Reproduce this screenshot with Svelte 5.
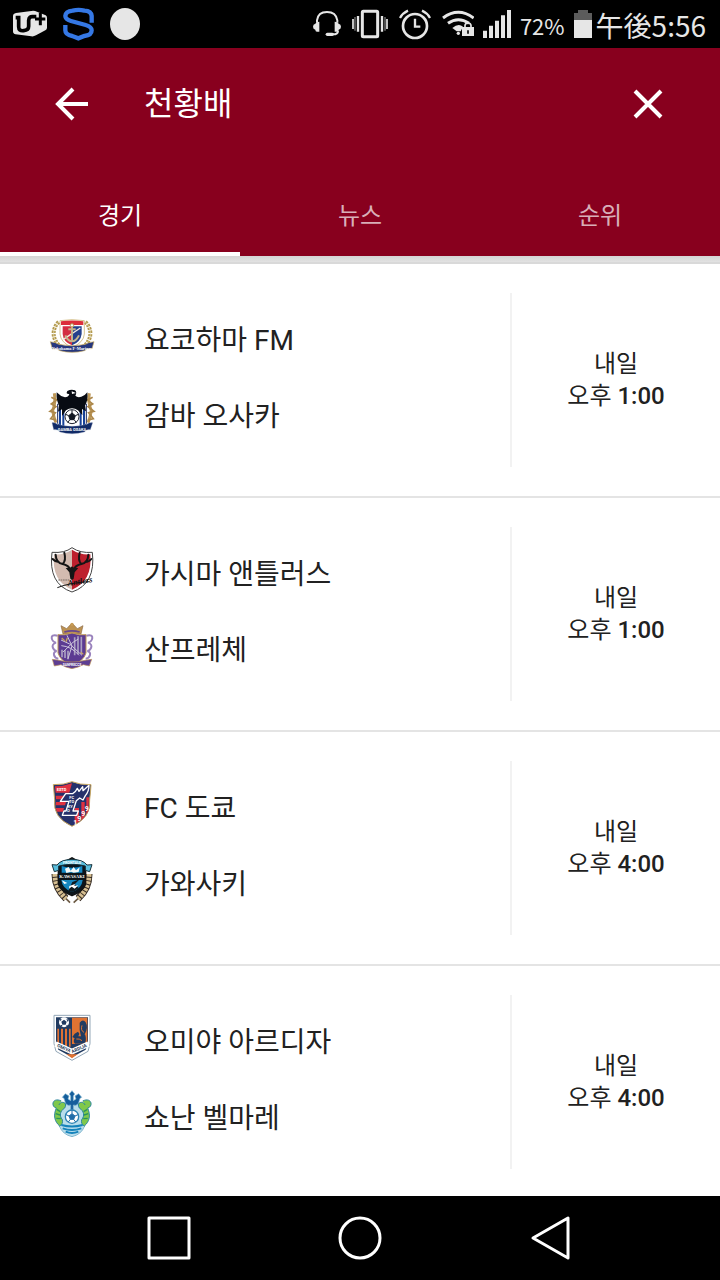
<script>
  const tabs = ["경기", "뉴스", "순위"];
  let active = $state("경기");

  const matches = [
    { home: "요코하마 FM", away: "감바 오사카", homeCrest: marinos, awayCrest: gamba, day: "내일", half: "오후", time: "1:00" },
    { home: "가시마 앤틀러스", away: "산프레체", homeCrest: antlers, awayCrest: sanfrecce, day: "내일", half: "오후", time: "1:00" },
    { home: "FC 도쿄", away: "가와사키", homeCrest: tokyo, awayCrest: frontale, day: "내일", half: "오후", time: "4:00" },
    { home: "오미야 아르디자", away: "쇼난 벨마레", homeCrest: ardija, awayCrest: bellmare, day: "내일", half: "오후", time: "4:00" },
  ];
</script>

{#snippet marinos()}
  <svg class="crest" viewBox="24 6 144 144" aria-hidden="true">
    <g fill="none" stroke="#b39a4f" stroke-width="12" stroke-dasharray="7 3">
      <path d="M56 36C34 58 36 90 62 110" />
      <path d="M136 36C158 58 156 90 130 110" />
    </g>
    <g fill="none" stroke="#ece3c0" stroke-width="2">
      <path d="M56 36C34 58 36 90 62 110M136 36C158 58 156 90 130 110" />
    </g>
    <path d="M60 32Q96 26 133 32V72Q131 98 96 112Q62 98 60 72Z" fill="#fff" stroke="#c3a65a" stroke-width="2" />
    <path d="M63 34Q96 29 130 34V45H63Z" fill="#dc2f3b" />
    <path d="M68 49H96V106Q70 96 68 72Z" fill="#d32e42" />
    <path d="M96 49H125V72Q122 96 96 106Z" fill="#25418d" />
    <path d="M70 88L121 54" stroke="#f1e9df" stroke-width="4" />
    <path d="M96 47V92M85 58H107M76 76Q84 94 96 94Q108 94 117 76" fill="none" stroke="#c3b48c" stroke-width="6" />
    <circle cx="96" cy="46" r="5" fill="#fff" stroke="#b89b51" stroke-width="3" />
    <path d="M31 95Q48 97 56 103Q96 112 136 103Q144 97 162 95L156 116Q141 114 133 122Q96 132 60 122Q51 114 37 117Z" fill="#26377e" stroke="#c8aa60" stroke-width="2" />
    <text x="96" y="119" font-size="13" font-weight="700" text-anchor="middle" fill="#fff" class="serif">Yokohama F·Marinos</text>
  </svg>
{/snippet}

{#snippet gamba()}
  <svg class="crest" viewBox="24 234 144 144" aria-hidden="true">
    <g fill="none" stroke="#bd9757" stroke-width="9">
      <path d="M43 250Q48 278 38 302Q42 325 48 338" />
      <path d="M148 250Q143 278 154 302Q150 325 144 338" />
    </g>
    <path d="M34 262L50 270L34 282L48 290L30 304L46 308L32 326L48 330M158 262L142 270L158 282L144 290L162 304L146 308L160 326L144 330" fill="none" stroke="#ad884b" stroke-width="5" />
    <path d="M53 282H139V340Q132 356 96 366Q60 356 53 340Z" fill="#fff" stroke="#1d2a5e" stroke-width="3" />
    <path d="M60 284V348M70 284V354M122 284V354M132 284V348" stroke="#174198" stroke-width="6" />
    <path d="M50 247Q61 259 75 262Q85 262 88 252Q76 253 82 243Q94 236 105 241Q112 247 106 257Q113 264 124 260Q136 256 142 247Q145 271 135 286L138 304L126 297L127 316L114 301Q96 288 78 301L66 318V298L54 305L57 286Q48 270 50 247Z" fill="#080b13" />
    <path d="M95 244L108 249L96 252Z" fill="#fff" />
    <circle cx="96" cy="320" r="21" fill="#fff" stroke="#1d2230" stroke-width="3" />
    <path d="M96 309L106 317L102 329H90L86 317ZM96 300V309M106 317L115 313M102 329L109 337M90 329L83 337M86 317L77 313" fill="#111722" stroke="#111722" stroke-width="3" />
    <path d="M36 338Q46 337 52 343Q96 355 140 343Q147 337 158 338L151 359Q140 357 133 366Q96 377 60 366Q52 357 41 359Z" fill="#102a67" stroke="#a9b2ca" stroke-width="1" />
    <text x="96" y="364" font-size="12" font-weight="700" text-anchor="middle" fill="#fff">GAMBA OSAKA</text>
  </svg>
{/snippet}

{#snippet antlers()}
  <svg class="crest" viewBox="24 18 144 144" aria-hidden="true">
    <path d="M96 23Q120 40 157 37Q168 132 96 156Q24 132 36 37Q74 40 96 23Z" fill="#fff" stroke="#444" stroke-width="3" />
    <path d="M96 29Q72 45 42 43Q34 124 96 149Z" fill="#d3bbb0" />
    <path d="M96 29Q120 45 151 43Q158 124 96 149Z" fill="#bd202d" />
    <path d="M92 90Q86 76 68 72Q48 68 47 44M68 72Q79 61 73 38M56 66Q46 66 38 57M100 90Q106 76 124 72Q144 68 145 44M124 72Q113 61 119 38M136 66Q147 66 154 57" fill="none" stroke="#151515" stroke-width="6" stroke-linecap="round" />
    <path d="M77 84L91 83L96 79L101 83L115 84L104 97L101 116L96 120L91 116L88 97Z" fill="#151515" />
    <path d="M55 120H90" stroke="#776a63" stroke-width="3" stroke-dasharray="5 2" />
    <path d="M52 143Q89 128 149 125" fill="none" stroke="#151515" stroke-width="3" />
    <text x="84" y="138" font-size="25" font-style="italic" font-weight="700" fill="#111" class="serif" transform="rotate(-9 84 138)">Antlers</text>
  </svg>
{/snippet}

{#snippet sanfrecce()}
  <svg class="crest" viewBox="24 246 144 144" aria-hidden="true">
    <path d="M69 282L63 257L80 266L96 249L112 266L129 257L123 282Z" fill="#bd9251" stroke="#8d6b48" stroke-width="2" />
    <circle cx="96" cy="253" r="5" fill="#c79c58" />
    <path d="M73 276Q96 269 119 276" fill="none" stroke="#68468f" stroke-width="5" />
    <g fill="none" stroke="#9a83bd" stroke-width="6">
      <path d="M53 287C24 280 36 306 48 308C28 315 42 332 50 333C36 336 41 355 55 356" />
      <path d="M139 287C168 280 156 306 144 308C164 315 150 332 142 333C156 336 151 355 137 356" />
    </g>
    <path d="M54 284Q73 287 96 279Q119 287 138 284V339Q132 362 96 378Q60 362 54 339Z" fill="#5c3b92" stroke="#bd985b" stroke-width="3" />
    <path d="M104 292V346M114 289V343M124 290V342M66 329V352M75 331V354M84 332V358" stroke="#aaa0c2" stroke-width="5" />
    <path d="M63 300L89 312L126 346M69 336L99 307L115 297M81 286L96 318L84 356M64 317Q94 319 117 346" fill="none" stroke="#cec6dc" stroke-width="3" />
    <path d="M65 294L74 302M82 294L78 305M122 337L130 343" stroke="#c7a263" stroke-width="4" />
    <path d="M37 358L57 361Q96 371 135 361L155 358L148 378L130 374Q116 382 96 386Q76 382 63 374L43 378Z" fill="#5e3e92" stroke="#bc9354" stroke-width="2" />
    <text x="96" y="377" font-size="10" font-weight="700" text-anchor="middle" fill="#fff">SANFRECCE</text>
  </svg>
{/snippet}

{#snippet tokyo()}
  <svg class="crest" viewBox="24 18 144 144" aria-hidden="true">
    <path d="M40 32Q72 33 96 23Q120 33 153 32Q152 52 149 77Q155 130 96 157Q37 130 44 77Z" fill="#25316b" stroke="#c7a65e" stroke-width="3" />
    <path d="M45 37Q72 37 96 28L88 56H47Z" fill="#df3140" />
    <path d="M47 65H74L64 76H48ZM48 84H78L75 94H47ZM47 102H72L69 113H51Z" fill="#df3140" />
    <path d="M104 102H117V143L104 149ZM124 84H134V128L124 139ZM139 70H147L145 112L139 121Z" fill="#df3140" />
    <path d="M61 82L77 59H98Q107 55 112 43L117 52L128 38L129 50L147 34Q147 53 136 65L129 78L119 72L109 80L99 111H115L110 124H67L72 111H78L87 82Z" fill="#25316b" stroke="#fff" stroke-width="4" stroke-linejoin="round" />
    <text x="50" y="52" font-size="12" font-weight="700" fill="#fff">ESTD</text>
    <g font-size="12" font-weight="700" fill="#fff">
      <text x="88" y="75">FC</text>
      <text x="87" y="88">TO</text>
      <text x="83" y="101">KY</text>
      <text x="81" y="114">O</text>
    </g>
    <g font-size="21" font-weight="700" fill="#fff">
      <text x="100" y="153">1</text>
      <text x="112" y="141">9</text>
      <text x="124" y="127">9</text>
      <text x="134" y="110">9</text>
    </g>
  </svg>
{/snippet}

{#snippet frontale()}
  <svg class="crest" viewBox="24 246 144 144" aria-hidden="true">
    <g fill="none" stroke="#352b24" stroke-width="21">
      <path d="M45 300Q45 344 78 374M147 300Q147 344 114 374" />
    </g>
    <g fill="none" stroke="#d6bf91" stroke-width="15" stroke-dasharray="8 3">
      <path d="M45 300Q45 344 78 374M147 300Q147 344 114 374" />
    </g>
    <path d="M78 374L90 386M114 374L101 386" stroke="#6c5a43" stroke-width="5" />
    <path d="M55 274L96 251L137 274V330Q131 351 96 365Q61 351 55 330Z" fill="#0b151b" stroke="#111" stroke-width="4" />
    <path d="M65 276Q96 286 127 276V296H65Z" fill="#1489c5" />
    <path d="M64 318H128Q126 343 96 354Q66 343 64 318Z" fill="#1687bf" />
    <path d="M85 350L97 324L119 316L104 331L116 342Q106 351 96 354Z" fill="#101b20" />
    <path d="M75 284L86 279L92 290L101 279L108 289L119 280L116 294L101 296L93 293L79 297Z" fill="#f4f8f8" />
    <path d="M65 319L82 327L73 330ZM88 336L105 330L103 336L115 334L104 344L95 338L87 344Z" fill="#fff" />
    <path d="M36 272L51 273Q62 257 96 256Q130 257 141 273L156 272L149 293L136 289V276Q96 266 56 276V289L43 293Z" fill="#59bddc" stroke="#17313b" stroke-width="3" />
    <text x="96" y="271" font-size="11" font-weight="700" text-anchor="middle" fill="#fff">FRONTALE</text>
    <text x="96" y="313" font-size="14" font-weight="700" text-anchor="middle" fill="#fff" class="serif">KAWASAKI</text>
  </svg>
{/snippet}

{#snippet ardija()}
  <svg class="crest" viewBox="24 18 144 144" aria-hidden="true">
    <path d="M42 22H150V107L144 130L96 157L48 130L42 107Z" fill="#fff" stroke="#93a7b7" stroke-width="3" />
    <path d="M48 28H144V105L137 125L96 148L55 125L48 105Z" fill="#213b61" />
    <path d="M96 29H142V108H96Z" fill="#e07332" />
    <path d="M52 62H57V106H52ZM63 62H69V112H63ZM75 62H81V116H75ZM87 62H92V116H87Z" fill="#df7134" />
    <circle cx="72" cy="43" r="15" fill="#fff" />
    <path d="M72 35L80 41L77 50H67L64 41ZM59 34L65 33L62 40ZM79 32L86 36L83 42ZM60 51L67 51L66 57ZM79 52L85 50L79 57Z" fill="#213b61" />
    <path d="M105 107Q98 101 104 91L97 87L104 77L114 71L118 77L115 85L123 85Q117 65 119 44Q129 32 137 43Q146 58 134 79Q140 87 136 107Z" fill="#213b61" />
    <path d="M126 52Q121 68 132 73M109 93Q118 91 126 98" fill="none" stroke="#e07332" stroke-width="3" />
    <path id="ardija-band" d="M46 108L96 131L146 108" fill="none" stroke="#fff" stroke-width="17" />
    <text font-size="14" font-weight="700" fill="#263b58" dy="5"><textPath href="#ardija-band" startOffset="50%" text-anchor="middle">OMIYA ARDIJA</textPath></text>
    <path d="M79 139H113L96 151Z" fill="#e07332" />
  </svg>
{/snippet}

{#snippet bellmare()}
  <svg class="crest" viewBox="24 246 144 144" aria-hidden="true">
    <path d="M58 354Q68 380 96 386Q124 380 134 354L128 285H64Z" fill="#b9ddeb" stroke="#5a9dbd" stroke-width="2" />
    <path d="M96 248L104 258L100 264V278L108 273L105 264L116 257L125 268L120 271L115 287Q107 295 100 291V306H92V291Q85 295 77 287L72 271L67 268L76 257L87 264L84 273L92 278V264L88 258Z" fill="#155e9c" stroke="#7eb6d1" stroke-width="2" />
    <path d="M64 279C37 266 31 296 49 300C39 323 44 341 59 354C66 350 69 344 67 335C57 323 60 309 74 300C85 282 61 277 57 291" fill="#7fc84b" stroke="#2c859d" stroke-width="3" />
    <path d="M128 279C155 266 161 296 143 300C153 323 148 341 133 354C126 350 123 344 125 335C135 323 132 309 118 300C107 282 131 277 135 291" fill="#7fc84b" stroke="#2c859d" stroke-width="3" />
    <path d="M50 304L61 311M47 317L60 321M49 331L62 332M142 304L131 311M145 317L132 321M143 331L130 332" stroke="#28935c" stroke-width="4" />
    <circle cx="96" cy="326" r="20" fill="#fff" stroke="#2d85b5" stroke-width="4" />
    <path d="M96 317L105 324L101 334H91L87 324ZM96 306V317M105 324L114 320M101 334L107 342M91 334L85 342M87 324L78 320" fill="#206da8" stroke="#206da8" stroke-width="3" />
    <path d="M64 351Q96 360 128 351M68 361Q96 371 124 361M77 371Q96 379 115 371" fill="none" stroke="#1683bb" stroke-width="6" />
  </svg>
{/snippet}

<div class="screen">
  <div class="status">
    <div class="notices">
      <svg width="34" height="48" viewBox="39 0 102 144" aria-hidden="true">
        <path d="M48 39L94 33Q102 31 111 35L137 46Q141 48 141 54V83Q141 88 136 91L108 106Q101 110 94 109L47 103Q39 102 39 94V48Q39 41 48 39Z" fill="#e6e6e6" />
        <path d="M47 53H56V80Q56 94 71 92Q86 91 86 79V61Q87 48 100 50H109" fill="none" stroke="#000" stroke-width="11" />
        <path d="M121 38V76M105 57H136" stroke="#000" stroke-width="9" />
      </svg>
      <svg width="31" height="48" viewBox="188 0 93 144" aria-hidden="true">
        <path d="M274 68V48Q273 33 252 32Q235 27 217 32Q196 34 195 48Q195 58 212 63L256 75Q274 80 274 91Q274 106 252 108L234 115L216 108Q195 105 195 91V75" fill="none" stroke="#3578e5" stroke-width="13" />
      </svg>
      <svg width="30" height="48" viewBox="333 0 90 144" aria-hidden="true">
        <ellipse cx="378" cy="72" rx="45" ry="48" fill="#e6e6e6" />
      </svg>
    </div>

    <div class="system">
      <div class="indicators">
        <svg width="28" height="48" viewBox="39 0 84 144" aria-hidden="true">
          <path d="M51 68V61Q54 36 81 36Q108 36 112 61V68M114 92Q114 103 99 103" fill="none" stroke="#e6e6e6" stroke-width="6" />
          <path d="M58 65V95H51Q46 95 46 89Q39 87 39 80Q39 73 46 71Q48 65 58 65ZM104 65V95H111Q116 95 116 89Q123 87 123 80Q123 73 116 71Q114 65 104 65Z" fill="#e6e6e6" />
          <rect x="77" y="98" width="25" height="10" rx="5" fill="#e6e6e6" />
        </svg>
        <svg width="36" height="48" viewBox="159 0 108 144" aria-hidden="true">
          <rect x="190" y="34" width="46" height="76" rx="3" fill="none" stroke="#e6e6e6" stroke-width="9" />
          <path d="M177 48V95M249 48V95" stroke="#e6e6e6" stroke-width="7" />
          <path d="M168 51V92M258 51V92" stroke="#777" stroke-width="4" />
          <path d="M162 57V87M264 57V87" stroke="#e6e6e6" stroke-width="5" />
        </svg>
        <svg width="32" height="48" viewBox="297 0 96 144" aria-hidden="true">
          <circle cx="345" cy="78" r="36" fill="none" stroke="#e6e6e6" stroke-width="8" />
          <path d="M345 56V80H361M300 54Q308 39 324 32M390 54Q382 39 366 32" fill="none" stroke="#e6e6e6" stroke-width="7" />
        </svg>
        <svg width="32" height="48" viewBox="429 0 96 144" aria-hidden="true">
          <path d="M432 54Q478 20 524 54M447 70Q478 48 510 70" fill="none" stroke="#e6e6e6" stroke-width="9" />
          <path d="M460 84Q478 69 492 80L485 94H473Z" fill="#e6e6e6" />
          <circle cx="478" cy="100" r="5" fill="#e6e6e6" />
          <path d="M489 81H525V108H489Z" fill="#e6e6e6" />
          <path d="M498 82V76Q499 69 507 69Q515 69 516 76V82" fill="none" stroke="#e6e6e6" stroke-width="5" />
          <path d="M507 91V101" stroke="#000" stroke-width="5" />
        </svg>
      </div>
      <svg width="28" height="48" viewBox="549 0 84 144" aria-hidden="true">
        <path d="M549 92H561V114H549ZM567 77H579V114H567ZM585 62H597V114H585ZM603 46H615V114H603ZM621 30H633V114H621Z" fill="#e6e6e6" />
      </svg>
      <span class="percent">72%</span>
      <svg width="18" height="48" viewBox="222 0 54 144" aria-hidden="true">
        <path d="M222 39H234V30H264V39H276V60H222Z" fill="#5c5c5c" />
        <path d="M222 60H276V114H222Z" fill="#e6e6e6" />
      </svg>
      <span class="clock">午後5:56</span>
    </div>
  </div>

  <header>
    <div class="toolbar">
      <button aria-label="뒤로">
        <svg width="48" height="48" viewBox="0 0 48 48" aria-hidden="true">
          <path d="M40 24H11M25 9L10 24L25 39" fill="none" stroke="#fff" stroke-width="4" />
        </svg>
      </button>
      <h1>천황배</h1>
      <button aria-label="닫기">
        <svg width="48" height="48" viewBox="0 0 48 48" aria-hidden="true">
          <path d="M11 11L37 37M37 11L11 37" stroke="#fff" stroke-width="4" />
        </svg>
      </button>
    </div>
    <div class="tabs" role="tablist">
      {#each tabs as tab}
        <button role="tab" aria-selected={active === tab} class:active={active === tab} onclick={() => (active = tab)}>{tab}</button>
      {/each}
    </div>
  </header>

  <main>
    {#each matches as match}
      <article class="match">
        <div class="teams">
          <div class="team">{@render match.homeCrest()}<span>{match.home}</span></div>
          <div class="team">{@render match.awayCrest()}<span>{match.away}</span></div>
        </div>
        <div class="kickoff">
          <span>{match.day}</span>
          <span>{match.half} <b>{match.time}</b></span>
        </div>
      </article>
    {/each}
  </main>

  <nav>
    <button aria-label="최근 앱">
      <svg width="48" height="48" viewBox="0 0 48 48" aria-hidden="true">
        <rect x="4" y="4" width="40" height="40" />
      </svg>
    </button>
    <button aria-label="홈">
      <svg width="48" height="48" viewBox="0 0 48 48" aria-hidden="true">
        <circle cx="24" cy="24" r="20" />
      </svg>
    </button>
    <button aria-label="이전">
      <svg width="48" height="48" viewBox="0 0 48 48" aria-hidden="true">
        <path d="M6 24L41 4V44Z" />
      </svg>
    </button>
  </nav>
</div>

<style>
  :global(body) {
    margin: 0;
    background: #fff;
  }

  .screen {
    display: flex;
    flex-direction: column;
    height: 100vh;
    font-family: Roboto, "Noto Sans CJK KR", sans-serif;
    color: #212121;
  }

  svg {
    display: block;
    flex: none;
  }

  button {
    padding: 0;
    border: 0;
    background: none;
    font: inherit;
    color: inherit;
    cursor: pointer;
  }

  /* --- Status bar --- */
  .status {
    flex: none;
    display: flex;
    justify-content: space-between;
    height: 48px;
    padding: 0 14px 0 13px;
    background: #000;
    color: #e6e6e6;
    font-family: "Noto Sans CJK JP", sans-serif;
  }

  .notices {
    display: flex;
    gap: 16px;
  }

  .system {
    display: flex;
    align-items: center;
    gap: 9px;
  }

  .indicators {
    display: flex;
    gap: 11px;
  }

  .percent {
    font-size: 22px;
    line-height: 48px;
    padding-top: 2px;
  }

  .clock {
    font-size: 28px;
    line-height: 48px;
    padding-top: 2px;
    margin-left: -5px;
  }

  /* --- App bar --- */
  header {
    flex: none;
    background: #88001e;
    color: #fff;
  }

  .toolbar {
    display: flex;
    align-items: center;
    height: 112px;
    padding: 0 48px;
  }

  h1 {
    flex: 1;
    margin: 0 48px;
    font-size: 32px;
    line-height: 48px;
    font-weight: 400;
  }

  .tabs {
    display: grid;
    grid-template-columns: repeat(3, 1fr);
    height: 96px;
  }

  .tabs button {
    padding-top: 20px;
    border-bottom: 4px solid transparent;
    font-size: 24px;
    line-height: 32px;
    color: rgba(255, 255, 255, 0.7);
  }

  .tabs button.active {
    border-color: #fff;
    color: #fff;
  }

  /* --- Match list --- */
  main {
    flex: 1;
    min-height: 0;
    overflow-y: auto;
    scrollbar-width: none;
    background: linear-gradient(#d5d5d5, #e2e2e2 6px, #d9d9d9 6px, #d9d9d9 8px, #fff 8px);
    padding-top: 8px;
  }

  .match {
    display: grid;
    grid-template-columns: 1fr 210px;
    align-items: center;
    height: 232px;
    border-bottom: 2px solid #e4e4e4;
  }

  .teams {
    display: grid;
    gap: 28px;
    padding: 0 0 12px 48px;
  }

  .team {
    display: flex;
    align-items: center;
    gap: 48px;
    height: 48px;
    font-size: 28px;
    line-height: 48px;
  }

  .team span {
    padding-top: 10px;
  }

  .crest {
    width: 48px;
    height: 48px;
  }

  .serif {
    font-family: "Liberation Serif", serif;
  }

  .kickoff {
    display: flex;
    flex-direction: column;
    align-items: center;
    justify-content: center;
    height: 174px;
    border-left: 2px solid #f2f2f2;
    font-size: 24px;
    line-height: 32px;
  }

  .kickoff b {
    font-weight: 500;
  }

  /* --- Navigation bar --- */
  nav {
    flex: none;
    display: grid;
    grid-template-columns: repeat(3, 1fr);
    height: 84px;
    padding: 0 74px;
    background: #000;
  }

  nav button {
    display: flex;
    align-items: center;
    justify-content: center;
  }

  nav svg {
    fill: none;
    stroke: #fff;
    stroke-width: 3;
    stroke-linejoin: round;
  }
</style>
